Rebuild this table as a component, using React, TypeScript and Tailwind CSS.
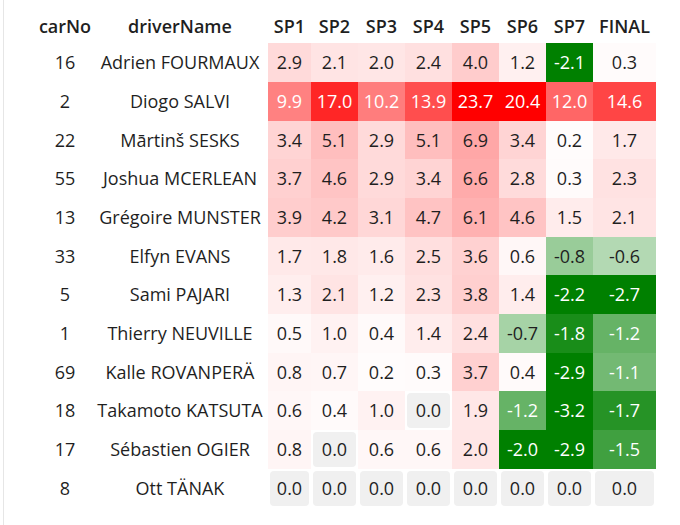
import React from "react"

// stage split times relative to the leader, seconds
const stages = ["SP1", "SP2", "SP3", "SP4", "SP5", "SP6", "SP7", "FINAL"]

const rows: { carNo: number; driverName: string; times: number[] }[] = [
  { carNo: 16, driverName: "Adrien FOURMAUX", times: [2.9, 2.1, 2.0, 2.4, 4.0, 1.2, -2.1, 0.3] },
  { carNo: 2, driverName: "Diogo SALVI", times: [9.9, 17.0, 10.2, 13.9, 23.7, 20.4, 12.0, 14.6] },
  { carNo: 22, driverName: "Mārtinš SESKS", times: [3.4, 5.1, 2.9, 5.1, 6.9, 3.4, 0.2, 1.7] },
  { carNo: 55, driverName: "Joshua MCERLEAN", times: [3.7, 4.6, 2.9, 3.4, 6.6, 2.8, 0.3, 2.3] },
  { carNo: 13, driverName: "Grégoire MUNSTER", times: [3.9, 4.2, 3.1, 4.7, 6.1, 4.6, 1.5, 2.1] },
  { carNo: 33, driverName: "Elfyn EVANS", times: [1.7, 1.8, 1.6, 2.5, 3.6, 0.6, -0.8, -0.6] },
  { carNo: 5, driverName: "Sami PAJARI", times: [1.3, 2.1, 1.2, 2.3, 3.8, 1.4, -2.2, -2.7] },
  { carNo: 1, driverName: "Thierry NEUVILLE", times: [0.5, 1.0, 0.4, 1.4, 2.4, -0.7, -1.8, -1.2] },
  { carNo: 69, driverName: "Kalle ROVANPERÄ", times: [0.8, 0.7, 0.2, 0.3, 3.7, 0.4, -2.9, -1.1] },
  { carNo: 18, driverName: "Takamoto KATSUTA", times: [0.6, 0.4, 1.0, 0.0, 1.9, -1.2, -3.2, -1.7] },
  { carNo: 17, driverName: "Sébastien OGIER", times: [0.8, 0.0, 0.6, 0.6, 2.0, -2.0, -2.9, -1.5] },
  { carNo: 8, driverName: "Ott TÄNAK", times: [0, 0, 0, 0, 0, 0, 0, 0] },
]

const lin = (c: number) => {
  const s = c / 255
  return s <= 0.03928 ? s / 12.92 : Math.pow((s + 0.055) / 1.055, 2.4)
}

// white -> red up to +20s, white -> green down to -2s
function cellColor(v: number) {
  let r: number, g: number, b: number
  if (v >= 0) {
    const a = Math.min(v / 20, 1)
    r = 255
    g = Math.round(255 * (1 - a))
    b = g
  } else {
    const a = Math.min(-v / 2, 1)
    r = Math.round(255 * (1 - a))
    g = Math.round(255 - a * 127)
    b = r
  }
  const lum = 0.2126 * lin(r) + 0.7152 * lin(g) + 0.0722 * lin(b)
  return { bg: `rgb(${r},${g},${b})`, fg: lum < 0.408 ? "#ffffff" : "#1f1f1f" }
}

const cols =
  "grid-cols-[90px_158px_43px_47px_47px_47px_47px_47px_47px_63px]"

function Cell({ v }: { v: number }) {
  if (v === 0) {
    return (
      <div className="h-[38.7px] p-[2px]">
        <div className="h-full rounded bg-[#f0f0f0] flex items-center justify-center">0.0</div>
      </div>
    )
  }
  const c = cellColor(v)
  return (
    <div
      className="h-[38.7px] flex items-center justify-center"
      style={{ backgroundColor: c.bg, color: c.fg }}
    >
      {v.toFixed(1)}
    </div>
  )
}

export default function App() {
  return (
    <div
      className="w-[680px] h-[525px] bg-white overflow-hidden text-[18px] text-[#1f1f1f]"
      style={{ fontFamily: '"Open Sans", "Noto Sans", sans-serif' }}
    >
      <div className="ml-[3px] h-full border-l border-[#e6e6e6] pl-[16px]">
        {/* header */}
        <div className={`grid ${cols} h-[43.3px] pt-[10px] items-center font-semibold whitespace-nowrap`}>
          <div className="flex justify-center">carNo</div>
          <div className="flex justify-center pr-[18px]">driverName</div>
          {stages.map(s => (
            <div key={s} className="flex justify-center">{s}</div>
          ))}
        </div>

        {rows.map(row => (
          <div key={row.carNo} className={`grid ${cols} whitespace-nowrap`}>
            <div className="h-[38.7px] flex items-center justify-center">{row.carNo}</div>
            <div className="h-[38.7px] flex items-center justify-center pr-[18px]">
              {row.driverName}
            </div>
            {row.times.map((t, i) => (
              <Cell key={i} v={t} />
            ))}
          </div>
        ))}
      </div>
    </div>
  )
}
